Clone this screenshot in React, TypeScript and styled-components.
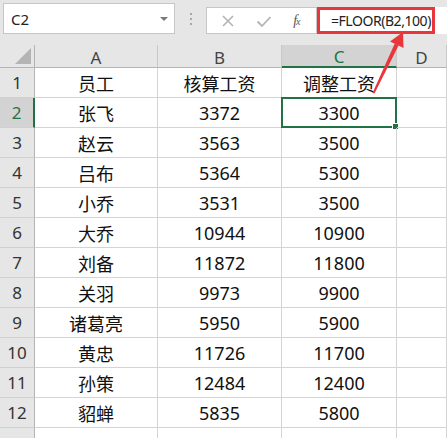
import React from 'react';
import styled, {createGlobalStyle, css} from 'styled-components';

const GlobalStyle = createGlobalStyle`
  html, body {
    margin: 0;
    padding: 0;
    background: #ffffff;
  }

  body {
    font-family: "Noto Sans", "Noto Sans CJK SC", sans-serif;
  }
`;

const Page = styled.div`
  position: relative;
  width: 447px;
  height: 438px;
  overflow: hidden;
  background: #ffffff;
`;

const TopBar = styled.div`
  display: flex;
  align-items: flex-start;
  height: 45px;
  padding: 3px 0 0 3px;
  box-sizing: border-box;
  background: #e6e6e6;
`;

const NameBox = styled.div`
  display: flex;
  align-items: center;
  justify-content: space-between;
  width: 172px;
  height: 31px;
  padding: 0 6px 0 7px;
  box-sizing: border-box;
  border: 1px solid #c6c6c6;
  background: #ffffff;
  font-size: 15px;
  color: #222;
`;

const DropArrow = styled.span`
  width: 0;
  height: 0;
  border-left: 4px solid transparent;
  border-right: 4px solid transparent;
  border-top: 4px solid #7a7a7a;
`;

const Grip = styled.div`
  display: flex;
  flex-direction: column;
  gap: 3px;
  width: 31px;
  height: 31px;
  align-items: center;
  justify-content: center;

  span {
    width: 2px;
    height: 2px;
    background: #a8a8a8;
  }
`;

const FuncBox = styled.div`
  display: flex;
  align-items: center;
  justify-content: space-around;
  width: 111px;
  height: 27px;
  margin-top: 4px;
  padding: 0 6px 0 4px;
  box-sizing: border-box;
  border: 1px solid #c6c6c6;
  background: #ffffff;
`;

const Fx = styled.span`
  font-family: "Liberation Serif", serif;
  font-style: italic;
  font-size: 14px;
  color: #555;
  letter-spacing: -1px;

  sub {
    font-size: 10px;
    vertical-align: baseline;
  }
`;

const FormulaField = styled.div`
  flex: 1;
  height: 27px;
  margin-top: 4px;
  background: #ffffff;
  display: flex;
`;

const Highlight = styled.div`
  display: flex;
  align-items: center;
  width: 118px;
  height: 27px;
  padding-left: 11px;
  box-sizing: border-box;
  border: 3px solid #e8373c;
  font-size: 14px;
  letter-spacing: -0.45px;
  color: #222;
`;

const Sheet = styled.div`
  display: grid;
  grid-template-columns: 35px 123px 124px 115px 50px;
  grid-auto-rows: 30px;
  grid-template-rows: 23px;
`;

const HeadCell = styled.div<{$active?: boolean}>`
  display: flex;
  align-items: center;
  justify-content: center;
  box-sizing: border-box;
  background: #e6e6e6;
  border-right: 1px solid #c8c8c8;
  border-bottom: 1px solid #b4b4b4;
  font-size: 17px;
  color: #444;
  padding-top: 2px;
  ${p => p.$active && css`
    background: #d3d3d3;
    color: #217346;
    border-bottom: 2px solid #217346;
  `}
`;

const Corner = styled(HeadCell)`
  position: relative;
  border-right-color: #b4b4b4;

  &::after {
    content: '';
    position: absolute;
    right: 3px;
    bottom: 3px;
    width: 0;
    height: 0;
    border-left: 16px solid transparent;
    border-bottom: 16px solid #b4b4b4;
  }
`;

const RowHead = styled.div<{$active?: boolean}>`
  display: flex;
  align-items: center;
  justify-content: center;
  box-sizing: border-box;
  background: #e6e6e6;
  border-right: 1px solid #b4b4b4;
  border-bottom: 1px solid #d0d0d0;
  font-size: 17px;
  color: #333;
  ${p => p.$active && css`
    background: #d3d3d3;
    color: #217346;
    border-right: 2px solid #217346;
  `}
`;

const Cell = styled.div`
  position: relative;
  display: flex;
  align-items: center;
  justify-content: center;
  box-sizing: border-box;
  border-right: 1px solid #d4d4d4;
  border-bottom: 1px solid #d4d4d4;
  font-size: 18px;
  color: #111;
`;

const Selection = styled.div`
  position: absolute;
  left: -1px;
  top: -1px;
  right: -1px;
  bottom: -1px;
  border: 2px solid #217346;
  pointer-events: none;
`;

const FillHandle = styled.div`
  position: absolute;
  right: -4px;
  bottom: -4px;
  width: 5px;
  height: 5px;
  background: #217346;
  border: 1px solid #ffffff;
`;

const Arrow = styled.svg`
  position: absolute;
  left: 0;
  top: 0;
  pointer-events: none;
`;

const rows: [string, string, string][] = [
  ['员工', '核算工资', '调整工资'],
  ['张飞', '3372', '3300'],
  ['赵云', '3563', '3500'],
  ['吕布', '5364', '5300'],
  ['小乔', '3531', '3500'],
  ['大乔', '10944', '10900'],
  ['刘备', '11872', '11800'],
  ['关羽', '9973', '9900'],
  ['诸葛亮', '5950', '5900'],
  ['黄忠', '11726', '11700'],
  ['孙策', '12484', '12400'],
  ['貂蝉', '5835', '5800'],
];

const cols = ['A', 'B', 'C', 'D'];

export default function App() {
  return <>
    <GlobalStyle/>
    <Page>
      <TopBar>
        <NameBox>
          <span>C2</span>
          <DropArrow/>
        </NameBox>
        <Grip><span/><span/><span/></Grip>
        <FuncBox>
          <svg width="14" height="14" viewBox="0 0 14 14">
            <path d="M2 2 L12 12 M12 2 L2 12" stroke="#b4b4b4" strokeWidth="1.6" fill="none"/>
          </svg>
          <svg width="16" height="14" viewBox="0 0 16 14">
            <path d="M1.5 7.5 L6 12 L14.5 3" stroke="#b4b4b4" strokeWidth="1.8" fill="none"/>
          </svg>
          <Fx>f<sub>x</sub></Fx>
        </FuncBox>
        <FormulaField>
          <Highlight>=FLOOR(B2,100)</Highlight>
        </FormulaField>
      </TopBar>

      <Sheet>
        <Corner/>
        {cols.map(c => <HeadCell key={c} $active={c === 'C'}>{c}</HeadCell>)}

        {rows.map((r, idx) => <React.Fragment key={idx}>
          <RowHead $active={idx === 1}>{idx + 1}</RowHead>
          <Cell>{r[0]}</Cell>
          <Cell>{r[1]}</Cell>
          <Cell>
            {r[2]}
            {idx === 1 && <Selection><FillHandle/></Selection>}
          </Cell>
          <Cell/>
        </React.Fragment>)}

        {/* row 13 is only a sliver at the bottom edge, no label visible */}
        <RowHead/>
        <Cell/><Cell/><Cell/><Cell/>
      </Sheet>

      <Arrow width="447" height="438">
        <polygon points="372.5,93 374.5,93.5 398.6,45.6 394.8,43.5" fill="#e8373c"/>
        <polygon points="403,32 403.5,48 390,41.5" fill="#e8373c"/>
      </Arrow>
    </Page>
  </>;
}
